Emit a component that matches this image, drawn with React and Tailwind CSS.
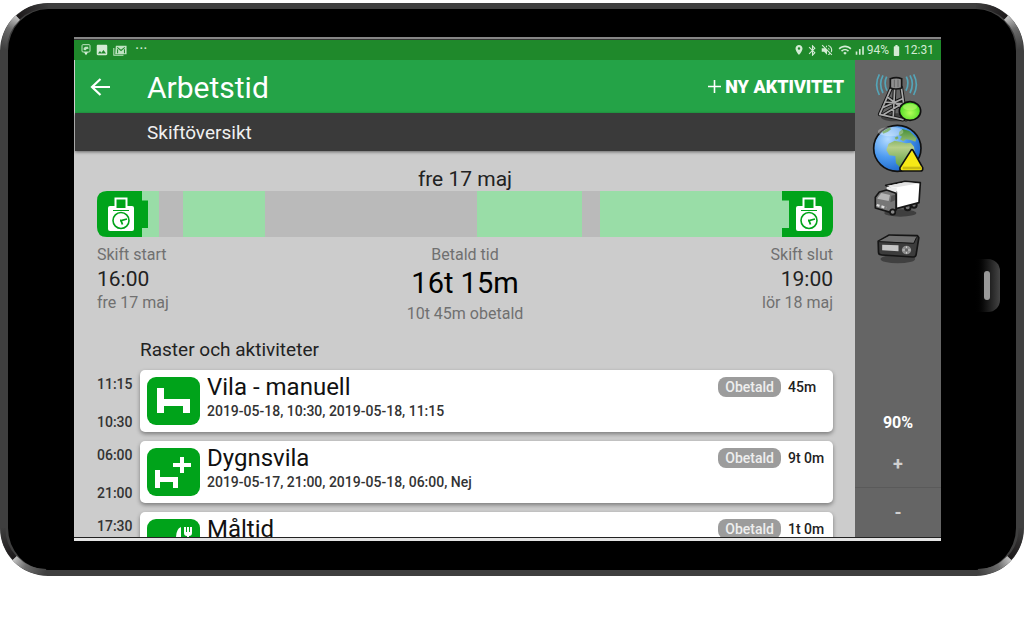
import React from 'react';
import {
  MdBatteryFull,
  MdBluetooth,
  MdImage,
  MdPlace,
  MdSignalCellularAlt,
  MdVolumeOff,
  MdWifi,
} from 'react-icons/md';

// width is the share of the whole shift
const segments = [
  { width: 62, paid: true },
  { width: 24, paid: false },
  { width: 82, paid: true },
  { width: 212, paid: false },
  { width: 105, paid: true },
  { width: 18, paid: false },
  { width: 233, paid: true },
];

const activities = [
  {
    id: 1,
    icon: 'bed',
    title: 'Vila - manuell',
    detail: '2019-05-18, 10:30, 2019-05-18, 11:15',
    end: '11:15',
    start: '10:30',
    duration: '45m',
  },
  {
    id: 2,
    icon: 'bedPlus',
    title: 'Dygnsvila',
    detail: '2019-05-17, 21:00, 2019-05-18, 06:00, Nej',
    end: '06:00',
    start: '21:00',
    duration: '9t 0m',
  },
  {
    id: 3,
    icon: 'meal',
    title: 'Måltid',
    end: '17:30',
    duration: '1t 0m',
  },
];

const FrameCorner = ({ className }) => (
  <svg viewBox="0 0 50 50" className={`absolute size-[50px] pointer-events-none ${className}`} aria-hidden="true">
    <defs>
      <linearGradient id="shine" x1="4" y1="46" x2="18" y2="14" gradientUnits="userSpaceOnUse">
        <stop offset="0" stopColor="#3f3f3f" />
        <stop offset="0.6" stopColor="#6c6c6c" />
        <stop offset="1" stopColor="#c6c6c6" />
      </linearGradient>
      <linearGradient id="shade" x1="18" y1="14" x2="50" y2="3" gradientUnits="userSpaceOnUse">
        <stop offset="0" stopColor="#1c191a" />
        <stop offset="1" stopColor="#3f3f3f" />
      </linearGradient>
    </defs>
    <path d="M4 46A43 43 0 0 1 18 14.500" fill="none" stroke="url(#shine)" strokeWidth="6" />
    <path d="M18 14.500A43 43 0 0 1 48 3" fill="none" stroke="url(#shade)" strokeWidth="5" />
  </svg>
);

const NotificationIcon = () => (
  <svg viewBox="0 0 30 36" className="h-3 w-[10px]" aria-hidden="true">
    <rect x="3" y="2" width="24" height="22" rx="3" fill="none" stroke="#bfe3c1" strokeWidth="3" />
    <path d="M8 18v-6l5-4h8l2 6-6 1-3 4z" fill="#bfe3c1" />
    <path d="M9 25h12l-6 9z" fill="#e3f5e4" />
  </svg>
);

const GalleryMailIcon = () => (
  <svg viewBox="0 0 40 32" className="h-[11px] w-[14px]" aria-hidden="true">
    <path d="M2 9v21h28" fill="none" stroke="#bfe3c1" strokeWidth="3" />
    <path d="M8 2h31v25H6z" fill="#bfe3c1" />
    <path d="M12 7l11 9 11-9M13 24V12M33 24V12" fill="none" stroke="#1f8a2b" strokeWidth="3" />
  </svg>
);

const StatusBar = () => (
  <div className="flex h-5 shrink-0 items-center justify-between bg-[#1f892b] pl-[7px] pr-[7px] text-[#d3ebd4]">
    <div className="flex items-center gap-1">
      <NotificationIcon />
      <MdImage className="size-[14px]" />
      <GalleryMailIcon />
      <span className="pb-[2px] pl-1 text-base leading-4">···</span>
    </div>
    <div className="flex items-center gap-[1px] text-[12px] leading-4">
      <MdPlace className="size-3" />
      <MdBluetooth className="size-[13px]" />
      <MdVolumeOff className="mr-[3px] size-[14px]" />
      <MdWifi className="size-[14px]" />
      <MdSignalCellularAlt className="size-[13px]" />
      <span>94%</span>
      <MdBatteryFull className="size-[13px]" />
      <span>12:31</span>
    </div>
  </div>
);

const Tachograph = ({ x }) => (
  <g transform={`translate(${x} 0)`}>
    <path d="M2 17q0-2 2-2h22q2 0 2 2v21q0 2-2 2H4q-2 0-2-2z" fill="#fff" />
    <rect x="9.5" y="7.5" width="11" height="10.5" fill="#00a31a" stroke="#fff" strokeWidth="2" />
    <path d="M7 19.500h16" stroke="#00a31a" strokeWidth="1" />
    <circle cx="15" cy="29.5" r="8" fill="none" stroke="#00a31a" strokeWidth="1.6" />
    <path d="M21 28l-6 1.500h-1M15 29.500l1.500 4" fill="none" stroke="#00a31a" strokeWidth="1.8" />
  </g>
);

const ShiftStartBadge = () => (
  <svg viewBox="0 0 51 46" className="h-[46px] w-[51px]" role="img" aria-label="Skift start">
    <path d="M10 0h35v9.500h6V37h-6v9H10Q0 46 0 36V10Q0 0 10 0z" fill="#00a31a" />
    <Tachograph x={9} />
  </svg>
);

const ShiftEndBadge = () => (
  <svg viewBox="0 0 51 46" className="h-[46px] w-[51px]" role="img" aria-label="Skift slut">
    <path d="M0 0h41q10 0 10 10v26q0 10-10 10H0v-9h7V9.500H0z" fill="#00a31a" />
    <Tachograph x={12} />
  </svg>
);

const ActivityIcon = ({ name }) => (
  <svg viewBox="0 0 53 48" className="h-12 w-[53px] shrink-0" aria-hidden="true">
    <rect width="53" height="48" rx="9" fill="#00a31a" />
    {name === 'bed' && <path d="M10 11h7v11h26v14h-7v-7H17v7h-7z" fill="#fff" />}
    {name === 'bedPlus' && (
      <path d="M8 22h5v7h18v11h-5v-6H13v6H8zM33 9h4v6h7v4h-7v6h-4v-6h-7v-4h7z" fill="#fff" />
    )}
    {name === 'meal' && (
      <>
        <path d="M34 8v17h-2v-6h-3q0-9 5-11z" fill="#fff" />
        <path d="M37 8h2v5h1V8h2v5h1V8h2v6q0 3-3 3v8h-2v-8q-3 0-3-3z" fill="#fff" />
        <path d="M8 22h5v7h18v11h-5v-6H13v6H8z" fill="#fff" />
      </>
    )}
  </svg>
);

const TowerIcon = () => (
  <svg viewBox="75 38 150 150" className="size-[50px]" aria-hidden="true">
    <defs>
      <radialGradient id="lamp" cx="0.5" cy="0.6" r="0.6">
        <stop offset="0" stopColor="#b4ff5a" />
        <stop offset="1" stopColor="#3fd81c" />
      </radialGradient>
    </defs>
    <g fill="none" stroke="#54a5b8" strokeWidth="5">
      <path d="M94 42q-16 30 0 62M105 45q-14 26 0 53M116 49q-10 20 1 42" />
      <path d="M197 42q16 30 0 62M186 45q14 26 0 53M175 49q10 20-1 42" />
    </g>
    <ellipse cx="145" cy="171" rx="46" ry="12" fill="#3f3f3f" />
    <path d="M130 82L95 162M160 82l14 96M140 82l-4 84M95 162l70 16M112 125l50 5M104 142l58-26M118 110l40 30M108 162l54-32" fill="none" stroke="#151515" strokeWidth="11" strokeLinecap="round" />
    <path d="M130 82L95 162M160 82l14 96M140 82l-4 84M95 162l70 16M112 125l50 5M104 142l58-26M118 110l40 30M108 162l54-32" fill="none" stroke="#a8a8a8" strokeWidth="5" strokeLinecap="round" />
    <path d="M127 55q18-6 34 0v28q-17 6-34 0z" fill="#8f8f8f" stroke="#151515" strokeWidth="5" />
    <path d="M139 58v23M150 58v23" stroke="#666" strokeWidth="3" />
    <ellipse cx="186" cy="152" rx="32" ry="28" fill="url(#lamp)" stroke="#111" strokeWidth="5" />
    <ellipse cx="186" cy="140" rx="21" ry="10" fill="#b6f56b" opacity="0.65" />
  </svg>
);

const GlobeIcon = () => (
  <svg viewBox="68 188 159 150" className="h-[50px] w-[53px]" aria-hidden="true">
    <defs>
      <radialGradient id="ocean" cx="0.3" cy="0.3" r="0.8">
        <stop offset="0" stopColor="#b5dcff" />
        <stop offset="0.5" stopColor="#4c9af0" />
        <stop offset="1" stopColor="#1660c4" />
      </radialGradient>
      <linearGradient id="land" x1="0" y1="0" x2="0" y2="1">
        <stop offset="0" stopColor="#3e8a32" />
        <stop offset="0.5" stopColor="#b7cf8a" />
        <stop offset="1" stopColor="#5e9f43" />
      </linearGradient>
    </defs>
    <ellipse cx="144" cy="264" rx="71" ry="69" fill="url(#ocean)" stroke="#111" strokeWidth="5" />
    <path
      d="M150 214l10-8 20 6 22 22-4 10-14-5-14-2-8 6-10-6 6-8-10-6zM118 250l18-9 18 4 16 4 14-2 10 12 2 14-10 2-8 12-12 16-14 18-12-12-2-22-18-2-9-16zM136 232l8-4 4 6-8 4zM98 214l22-12 6 4-10 8-14 6z"
      fill="url(#land)"
    />
    <ellipse cx="124" cy="214" rx="38" ry="14" fill="#fff" opacity="0.3" />
    <path d="M185 270q3-4 6 0l29 52q2 10-7 10h-54q-9 0-7-10z" fill="#f6e916" stroke="#111" strokeWidth="5" strokeLinejoin="round" />
    <path d="M160 319h57v8h-57z" fill="#cabb12" />
  </svg>
);

const TruckIcon = () => (
  <svg viewBox="62 40 154 120" className="h-10 w-[52px]" aria-hidden="true">
    <ellipse cx="146" cy="145" rx="48" ry="11" fill="#3f3f3f" />
    <circle cx="168" cy="128" r="9" fill="#777" stroke="#161616" strokeWidth="6" />
    <circle cx="187" cy="121" r="8" fill="#777" stroke="#161616" strokeWidth="6" />
    <path d="M102 62l58-12 46 4-4 60-68 18V82z" fill="#fff" stroke="#161616" strokeWidth="5" strokeLinejoin="round" />
    <path d="M105 64l55-11 43 3-68 12z" fill="#e2e2e2" />
    <path d="M105 66l30 3v20l-30-9z" fill="#ececec" />
    <path d="M71 98l12-16 22-6 28 10v50l-14 8-48-14z" fill="#777" stroke="#161616" strokeWidth="5" strokeLinejoin="round" />
    <path d="M80 97l9-12 26 6-4 18-34-7z" fill="#b4b4b4" />
    <path d="M119 93l11-3v17l-14 6z" fill="#555" />
    <path d="M75 121l29 9" stroke="#ddd" strokeWidth="7" strokeDasharray="9 6" />
    <circle cx="123" cy="142" r="8" fill="#888" stroke="#161616" strokeWidth="5" />
  </svg>
);

const RadioIcon = () => (
  <svg viewBox="70 200 140 96" className="h-8 w-[47px]" aria-hidden="true">
    <ellipse cx="138" cy="281" rx="52" ry="13" fill="#404040" />
    <path d="M79 228l33-19 85 2 4 6-8 50q-1 8-9 8l-94-6q-10 0-10-8z" fill="#3c3c3c" stroke="#151515" strokeWidth="5" strokeLinejoin="round" />
    <path d="M82 228l31-17 82 3-10 19z" fill="#707070" />
    <path d="M82 229l104 5 8-18" fill="none" stroke="#151515" strokeWidth="3" />
    <path d="M91 238l49 2v18l-49-3z" fill="#c5c5c5" />
    <ellipse cx="164" cy="254" rx="14" ry="13" fill="#8e8e8e" />
    <path d="M164 243v22M152 254h24" stroke="#ccc" strokeWidth="3" />
    <circle cx="164" cy="254" r="5" fill="#666" />
  </svg>
);

const SideBar = () => (
  <aside className="flex w-[86px] shrink-0 flex-col items-center bg-[#656565] pt-[13px]">
    <button type="button" aria-label="Mobilnät"><TowerIcon /></button>
    <button type="button" aria-label="Internet"><GlobeIcon /></button>
    <button type="button" aria-label="Fordon" className="mt-[5px]"><TruckIcon /></button>
    <button type="button" aria-label="Färddator" className="mt-[14px]"><RadioIcon /></button>
    <div className="mt-auto flex w-full flex-col text-center font-bold">
      <p className="pb-2 text-base leading-5 text-white">90%</p>
      <button type="button" className="h-[46px] text-lg text-[#d0d0d0]">+</button>
      <button type="button" className="h-[50px] border-t border-[#5a5a5a] text-lg text-[#d0d0d0]">-</button>
    </div>
  </aside>
);

const ShiftSummary = () => (
  <section className="px-[22px] pt-4">
    <h3 className="text-center text-[21px] leading-6 text-[#222]">fre 17 maj</h3>
    <div className="relative flex h-[46px]">
      {segments.map((segment, i) => (
        <div
          key={i}
          className={`${segment.paid ? 'bg-[#99dda7]' : 'bg-[#bababa]'} ${i === 0 ? 'rounded-l-[10px]' : ''} ${
            i === segments.length - 1 ? 'rounded-r-[10px]' : ''
          }`}
          style={{ flexGrow: segment.width, flexBasis: 0 }}
        />
      ))}
      <div className="absolute left-0 top-0"><ShiftStartBadge /></div>
      <div className="absolute right-0 top-0"><ShiftEndBadge /></div>
    </div>
    <div className="grid grid-cols-3 pt-2 text-base leading-5 text-[#707070]">
      <div>
        <p>Skift start</p>
        <p className="text-[21px] leading-7 text-[#222]">16:00</p>
        <p>fre 17 maj</p>
      </div>
      <div className="text-center">
        <p>Betald tid</p>
        <p className="pb-[3px] text-[29px] leading-9 text-black">16t 15m</p>
        <p>10t 45m obetald</p>
      </div>
      <div className="text-right">
        <p>Skift slut</p>
        <p className="text-[21px] leading-7 text-[#222]">19:00</p>
        <p>lör 18 maj</p>
      </div>
    </div>
  </section>
);

const ActivityRow = ({ activity }) => (
  <li className="flex h-[62px] shrink-0 gap-2">
    <div className="flex w-[35px] flex-col justify-between pt-1 text-right text-sm leading-5 font-medium text-[#333]">
      <time>{activity.end}</time>
      {activity.start && <time>{activity.start}</time>}
    </div>
    <article className="flex flex-1 items-start gap-[7px] rounded-[5px] bg-white pl-[7px] pt-[7px] shadow-[0_2px_4px_rgba(0,0,0,0.4)]">
      <ActivityIcon name={activity.icon} />
      <div className="-mt-1 flex-1">
        <h4 className="text-2xl leading-7 text-[#111]">{activity.title}</h4>
        {activity.detail && <p className="text-sm leading-5 font-medium text-[#333]">{activity.detail}</p>}
      </div>
      <span className="rounded-lg bg-[#9c9c9c] px-[7px] text-sm leading-5 font-medium text-[#eee]">Obetald</span>
      <span className="w-[45px] text-sm leading-5 font-medium whitespace-nowrap text-[#222]">{activity.duration}</span>
    </article>
  </li>
);

const App = () => {
  return (
    <div className="h-screen overflow-hidden bg-white pt-[3px] pb-[42px] font-['Roboto',sans-serif]">
      <div className="relative flex h-full rounded-[48px] border-x-8 border-y-[6px] border-[#3f3f3f] bg-black">
        <FrameCorner className="-left-2 -top-[6px]" />
        <FrameCorner className="-right-2 -top-[6px] -scale-x-100" />
        <FrameCorner className="-left-2 -bottom-[6px] -rotate-90" />
        <FrameCorner className="-right-2 -bottom-[6px] -scale-x-100 rotate-90" />

        <div className="mt-7 mb-[29px] ml-[66px] flex min-w-0 flex-1 flex-col border-t-2 border-b-[3px] border-t-[#858585] border-b-[#e4e4e4]">
          <div className="h-px shrink-0 bg-[#333]" />
          <StatusBar />
          <div className="flex min-h-0 flex-1 border-l border-[#cfcfcf]">
            <main className="flex min-w-0 flex-1 flex-col bg-[#cccccc]">
              <header className="flex h-[53px] shrink-0 items-center bg-[#24a347] pl-[15px] pr-[11px] text-white">
                <button type="button" aria-label="Tillbaka">
                  <svg viewBox="0 0 20 20" className="size-5" aria-hidden="true">
                    <path d="M20 10H2M10.500 2L2 10l8.500 8" fill="none" stroke="#fff" strokeWidth="2.200" />
                  </svg>
                </button>
                <h1 className="ml-[37px] flex-1 pt-[2px] text-[30px] leading-9">Arbetstid</h1>
                <button type="button" className="flex items-center gap-1 text-lg leading-6 font-black">
                  <svg viewBox="0 0 13 13" className="size-[13px]" aria-hidden="true">
                    <path d="M6.500 0v13M0 6.500h13" stroke="#fff" strokeWidth="1.600" />
                  </svg>
                  NY AKTIVITET
                </button>
              </header>
              <div className="flex h-[38px] shrink-0 items-center bg-[#3a3a3a] pt-[2px] pl-[72px] shadow-[0_1px_3px_rgba(0,0,0,0.5)]">
                <h2 className="text-[19px] leading-6 text-[#f0f0f0]">Skiftöversikt</h2>
              </div>
              <div className="min-h-0 flex-1 overflow-hidden">
                <ShiftSummary />
                <section className="px-[22px] pt-[14px]">
                  <h3 className="pl-[43px] text-[19px] leading-6 text-[#222]">Raster och aktiviteter</h3>
                  <ul className="flex flex-col gap-[9px] pt-2">
                    {activities.map((activity) => (
                      <ActivityRow key={activity.id} activity={activity} />
                    ))}
                  </ul>
                </section>
              </div>
            </main>
            <SideBar />
          </div>
          <div className="h-px shrink-0 bg-[#222]" />
        </div>

        <div className="flex w-[75px] shrink-0 items-center justify-center pb-2 pl-4">
          <button
            type="button"
            aria-label="Hem"
            className="flex h-[53px] w-[27px] items-center justify-center rounded-r-[12px] bg-linear-to-r from-black to-[#454545]"
          >
            <span className="h-[29px] w-[6px] rounded-sm bg-[#999]" />
          </button>
        </div>
      </div>
    </div>
  );
};

export default App;
